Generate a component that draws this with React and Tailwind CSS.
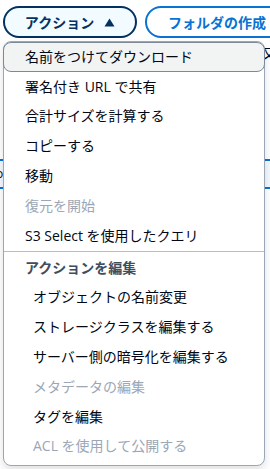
import React from "react";

const font = { fontFamily: '"Open Sans", "Noto Sans CJK JP", sans-serif' };

function Item({ children, disabled, indent, highlight }) {
  return (
    <div
      className={
        "h-[29.8px] flex items-center text-[14px] leading-[20px] " +
        (indent ? "pl-[29px] " : "pl-[21px] ") +
        (disabled ? "text-[#9ba7b6] " : "text-[#000716] ") +
        (highlight
          ? "bg-[#f2f3f3] border border-[#7d8998] rounded-[8px] -mx-px "
          : "")
      }
    >
      {children}
    </div>
  );
}

export default function App() {
  return (
    <div
      className="relative w-[270px] h-[469px] bg-white overflow-hidden"
      style={font}
    >
      {/* background page */}
      <div className="flex items-center gap-[8px] pt-[6px] pl-[3px]">
        <button className="h-[32px] w-[134px] shrink-0 rounded-full border-2 border-[#033160] bg-[#f2fbff] flex items-center justify-center gap-[10px] text-[#033160] font-bold text-[14px]">
          <span>アクション</span>
          <svg width="11" height="9" viewBox="0 0 11 9">
            <path d="M5.5 0.5 L10.5 8.5 L0.5 8.5 Z" fill="#033160" />
          </svg>
        </button>
        <button className="h-[32px] w-[160px] shrink-0 rounded-full border-2 border-[#0972d3] bg-white flex items-center pl-[21px] text-[#0972d3] font-bold text-[14px]">
          フォルダの作成
        </button>
      </div>
      <div className="flex justify-end pr-0 mt-[4px] h-[20px] text-[14px] text-[#000716]">
        <span className="-mr-[6px]">又</span>
      </div>
      <div className="mt-[97px] h-[30px] border-y-2 border-[#0972d3] bg-[#f2f8fd] flex items-center text-[12px] text-[#000716]">
        <span className="-ml-[4px]">o</span>
      </div>

      {/* dropdown menu */}
      <div className="absolute left-[3px] top-[41px] w-[262px] h-[425px] bg-white border border-[#9ba7b6] rounded-[8px] shadow-[0_4px_8px_rgba(0,7,22,0.12)]">
        <Item highlight>名前をつけてダウンロード</Item>
        <Item>署名付き URL で共有</Item>
        <Item>合計サイズを計算する</Item>
        <Item>コピーする</Item>
        <Item>移動</Item>
        <Item disabled>復元を開始</Item>
        <Item>S3 Select を使用したクエリ</Item>
        <div className="h-px bg-[#b6bec9]" />
        <div className="h-[31px] flex items-center pl-[21px] text-[14px] font-bold text-[#414d5c]">
          アクションを編集
        </div>
        <Item indent>オブジェクトの名前変更</Item>
        <Item indent>ストレージクラスを編集する</Item>
        <Item indent>サーバー側の暗号化を編集する</Item>
        <Item indent disabled>メタデータの編集</Item>
        <Item indent>タグを編集</Item>
        <Item indent disabled>ACL を使用して公開する</Item>
      </div>
    </div>
  );
}
